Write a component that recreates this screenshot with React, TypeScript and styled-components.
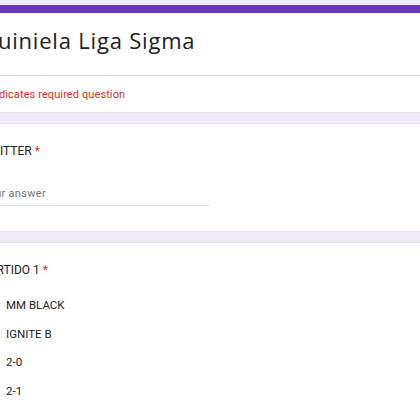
import styled, { createGlobalStyle } from "styled-components";

const GlobalStyle = createGlobalStyle`
  html, body {
    margin: 0;
    padding: 0;
    background: #f0ebf8;
    overflow: hidden;
  }
  body {
    font-family: Roboto, "Liberation Sans", sans-serif;
    color: #202124;
  }
`;

const SSheet = styled.div`
  display: flex;
  flex-direction: column;
  gap: 10px;
  width: 500px;
  margin-left: -43px;
  padding-top: 5px;
`;

const SCard = styled.section<{ $accent?: boolean }>`
  background: #ffffff;
  border: 1px solid #e4e0ec;
  border-top: ${(p) => (p.$accent ? "8px solid #673ab7" : "1px solid #e4e0ec")};
  border-radius: 8px;
  overflow: hidden;
`;

const STitleBlock = styled.div`
  height: 62px;
  padding: 0 24px;
  display: flex;
  align-items: center;
  border-bottom: 1px solid #dadce0;
`;

const STitle = styled.h1`
  margin: 0 0 9px -2px;
  font-family: "Open Sans", Roboto, sans-serif;
  font-size: 22px;
  font-weight: 400;
  letter-spacing: 0.8px;
  color: #202124;
`;

const SRequiredNote = styled.div`
  height: 36px;
  padding: 0 24px;
  display: flex;
  align-items: center;
  font-size: 11px;
  color: #d93025;
  letter-spacing: 0.1px;
`;

const SQuestion = styled.div`
  padding: 19px 24px 0;
`;

const SQuestionTitle = styled.div`
  font-size: 12px;
  line-height: 16px;
  color: #202124;
`;

const SAsterisk = styled.span`
  color: #d93025;
  margin-left: 3px;
`;

const SAnswer = styled.div`
  margin-top: 28px;
  width: 228px;
  padding-bottom: 4px;
  border-bottom: 1px solid #e6e6e6;
  font-size: 11px;
  line-height: 14px;
  letter-spacing: 0.3px;
  color: #70757a;
`;

const SQuestionCard = styled(SCard)<{ $height?: number }>`
  height: ${(p) => (p.$height ? `${p.$height}px` : "auto")};
`;

const SOptionList = styled.ul`
  list-style: none;
  margin: 19px 0 0;
  padding: 0;
  display: flex;
  flex-direction: column;
  gap: 12.5px;
`;

const SOption = styled.li`
  display: flex;
  align-items: center;
  gap: 10px;
  height: 16px;
  font-size: 11.5px;
  color: #202124;
`;

const SRadio = styled.span`
  width: 10px;
  height: 10px;
  border: 2px solid #5f6368;
  border-radius: 50%;
  flex-shrink: 0;
`;

const options = ["MM BLACK", "IGNITE B", "2-0", "2-1"];

const App = () => {
  return (
    <>
      <GlobalStyle />
      <SSheet>
        <SCard $accent>
          <STitleBlock>
            <STitle>Quiniela Liga Sigma</STitle>
          </STitleBlock>
          <SRequiredNote>* Indicates required question</SRequiredNote>
        </SCard>

        <SQuestionCard $height={107}>
          <SQuestion>
            <SQuestionTitle>
              TWITTER<SAsterisk>*</SAsterisk>
            </SQuestionTitle>
            <SAnswer>Your answer</SAnswer>
          </SQuestion>
        </SQuestionCard>

        <SQuestionCard $height={260}>
          <SQuestion>
            <SQuestionTitle>
              PARTIDO 1<SAsterisk>*</SAsterisk>
            </SQuestionTitle>
            <SOptionList>
              {options.map((o) => (
                <SOption key={o}>
                  <SRadio />
                  {o}
                </SOption>
              ))}
            </SOptionList>
          </SQuestion>
        </SQuestionCard>
      </SSheet>
    </>
  );
};

export default App;
